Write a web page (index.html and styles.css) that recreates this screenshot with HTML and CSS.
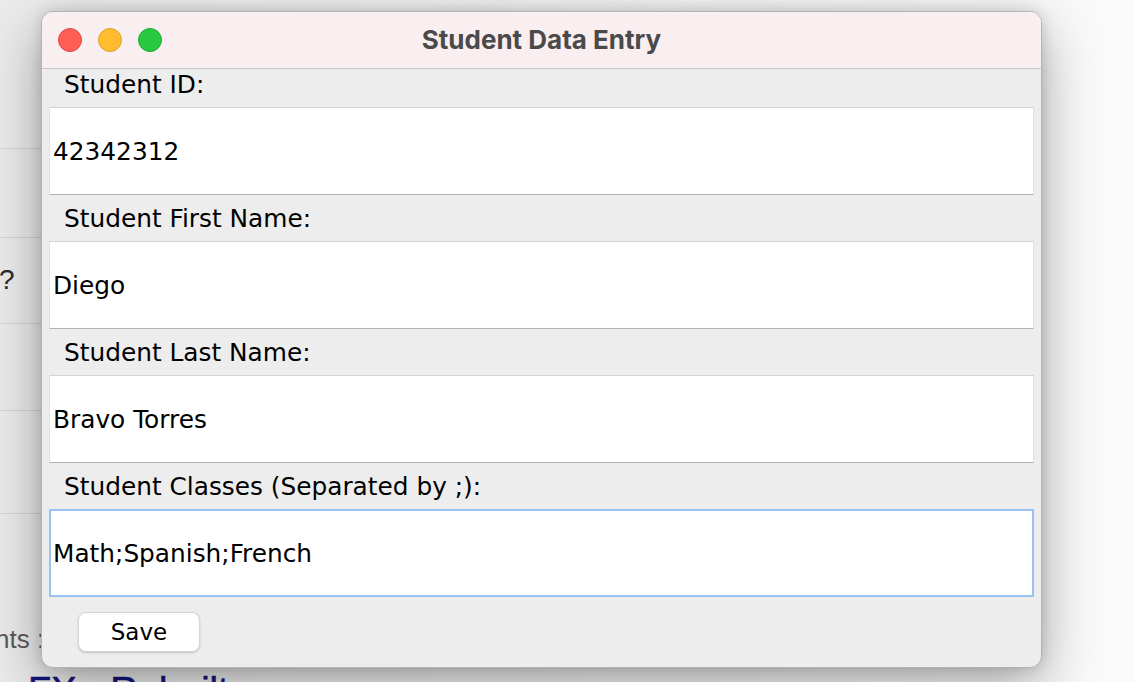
FILE: index.html
```html
<!DOCTYPE html>
<html lang="en">
<head>
<meta charset="utf-8">
<title>Student Data Entry</title>
<link rel="stylesheet" href="styles.css">
</head>
<body>
<div class="page">
  <div class="row r1"></div>
  <div class="row r2"></div>
  <div class="row r3"><span class="q">?</span></div>
  <div class="row r4"></div>
  <div class="row r5"></div>
  <div class="note">nts :</div>
  <h1 class="heading">FX - Rebuilt</h1>
</div>

<div class="window">
  <div class="titlebar">
    <div class="lights">
      <span class="light red"></span>
      <span class="light yellow"></span>
      <span class="light green"></span>
    </div>
    <div class="title">Student Data Entry</div>
    <div class="spacer"></div>
  </div>
  <div class="content">
    <div class="label first">Student ID:</div>
    <div class="field">42342312</div>
    <div class="label">Student First Name:</div>
    <div class="field">Diego</div>
    <div class="label">Student Last Name:</div>
    <div class="field">Bravo Torres</div>
    <div class="label">Student Classes (Separated by ;):</div>
    <div class="field focused">Math;Spanish;French</div>
    <div class="actions">
      <button class="btn" type="button">Save</button>
    </div>
  </div>
</div>
</body>
</html>
```

FILE: styles.css
```css
* { box-sizing: border-box; }

html, body {
  margin: 0;
  padding: 0;
}

body {
  width: 1134px;
  height: 682px;
  overflow: hidden;
  position: relative;
  background: linear-gradient(90deg, #ebebeb 0%, #f1f1f1 40%, #fafafa 100%);
  font-family: "Liberation Sans", Arial, sans-serif;
}

/* background page (behind the window) */
.page {
  width: 700px;
  display: flex;
  flex-direction: column;
}

.row {
  border-bottom: 1px solid #d4d4d4;
  display: flex;
  align-items: center;
}
.r1 { height: 149px; }
.r2 { height: 89px; }
.r3 { height: 86px; }
.r4 { height: 87px; }
.r5 { height: 103px; }

.q {
  font-size: 28px;
  color: #2a2a2a;
  margin-left: -1px;
  margin-top: -2px;
}

.note {
  margin-top: 110px;
  font-size: 26px;
  line-height: 30px;
  color: #5a5a5a;
  margin-left: -5px;
}

.heading {
  margin: 16px 0 0 28px;
  font-size: 38px;
  font-weight: normal;
  color: #15157a;
  -webkit-text-stroke: 0.6px #15157a;
  white-space: nowrap;
}

/* window */
.window {
  position: absolute;
  left: 41px;
  top: 11px;
  width: 1001px;
  height: 657px;
  border: 1px solid #b4b4b4;
  border-radius: 12px;
  background: #ededed;
  overflow: hidden;
  box-shadow: 0 18px 55px rgba(0, 0, 0, 0.34), 0 0 14px rgba(0, 0, 0, 0.14);
  display: flex;
  flex-direction: column;
}

.titlebar {
  height: 57px;
  flex: none;
  background: #f9eff0;
  border-bottom: 1px solid #cbc7c8;
  display: grid;
  grid-template-columns: 1fr auto 1fr;
  align-items: center;
}

.lights {
  display: flex;
  gap: 16px;
  padding-left: 16px;
}

.light {
  width: 24px;
  height: 24px;
  border-radius: 50%;
  display: block;
}
.red { background: #fe5f57; border: 1px solid #e2463f; }
.yellow { background: #febc2e; border: 1px solid #dfa023; }
.green { background: #28c840; border: 1px solid #1eab2e; }

.title {
  font-family: Inter, "Liberation Sans", sans-serif;
  font-weight: 700;
  font-size: 26px;
  color: #4b4a4a;
  margin-top: -2px;
}

.content {
  flex: 1;
  padding: 0 7px;
  display: flex;
  flex-direction: column;
  font-family: "DejaVu Sans", "Liberation Sans", sans-serif;
  color: #000;
}

.label {
  height: 46px;
  display: flex;
  align-items: center;
  padding-left: 15px;
  font-size: 24.8px;
}
.label.first {
  height: 38px;
  padding-bottom: 8px;
}

.field {
  height: 88px;
  background: #fff;
  border: 1px solid #e2e2e2;
  border-top-color: #d3d3d3;
  border-bottom-color: #b2b2b2;
  display: flex;
  align-items: center;
  padding-left: 3px;
  font-size: 24.8px;
}

.field.focused {
  border: 2px solid #97c2f2;
  padding-left: 2px;
}

.actions {
  padding: 15px 0 0 29px;
}

.btn {
  width: 122px;
  height: 40px;
  border: 1px solid #d6d6d6;
  border-radius: 8px;
  background: #fff;
  box-shadow: 0 1px 2px rgba(0, 0, 0, 0.18);
  font-family: "DejaVu Sans", "Liberation Sans", sans-serif;
  font-size: 23px;
  color: #000;
  padding: 0;
}
```
